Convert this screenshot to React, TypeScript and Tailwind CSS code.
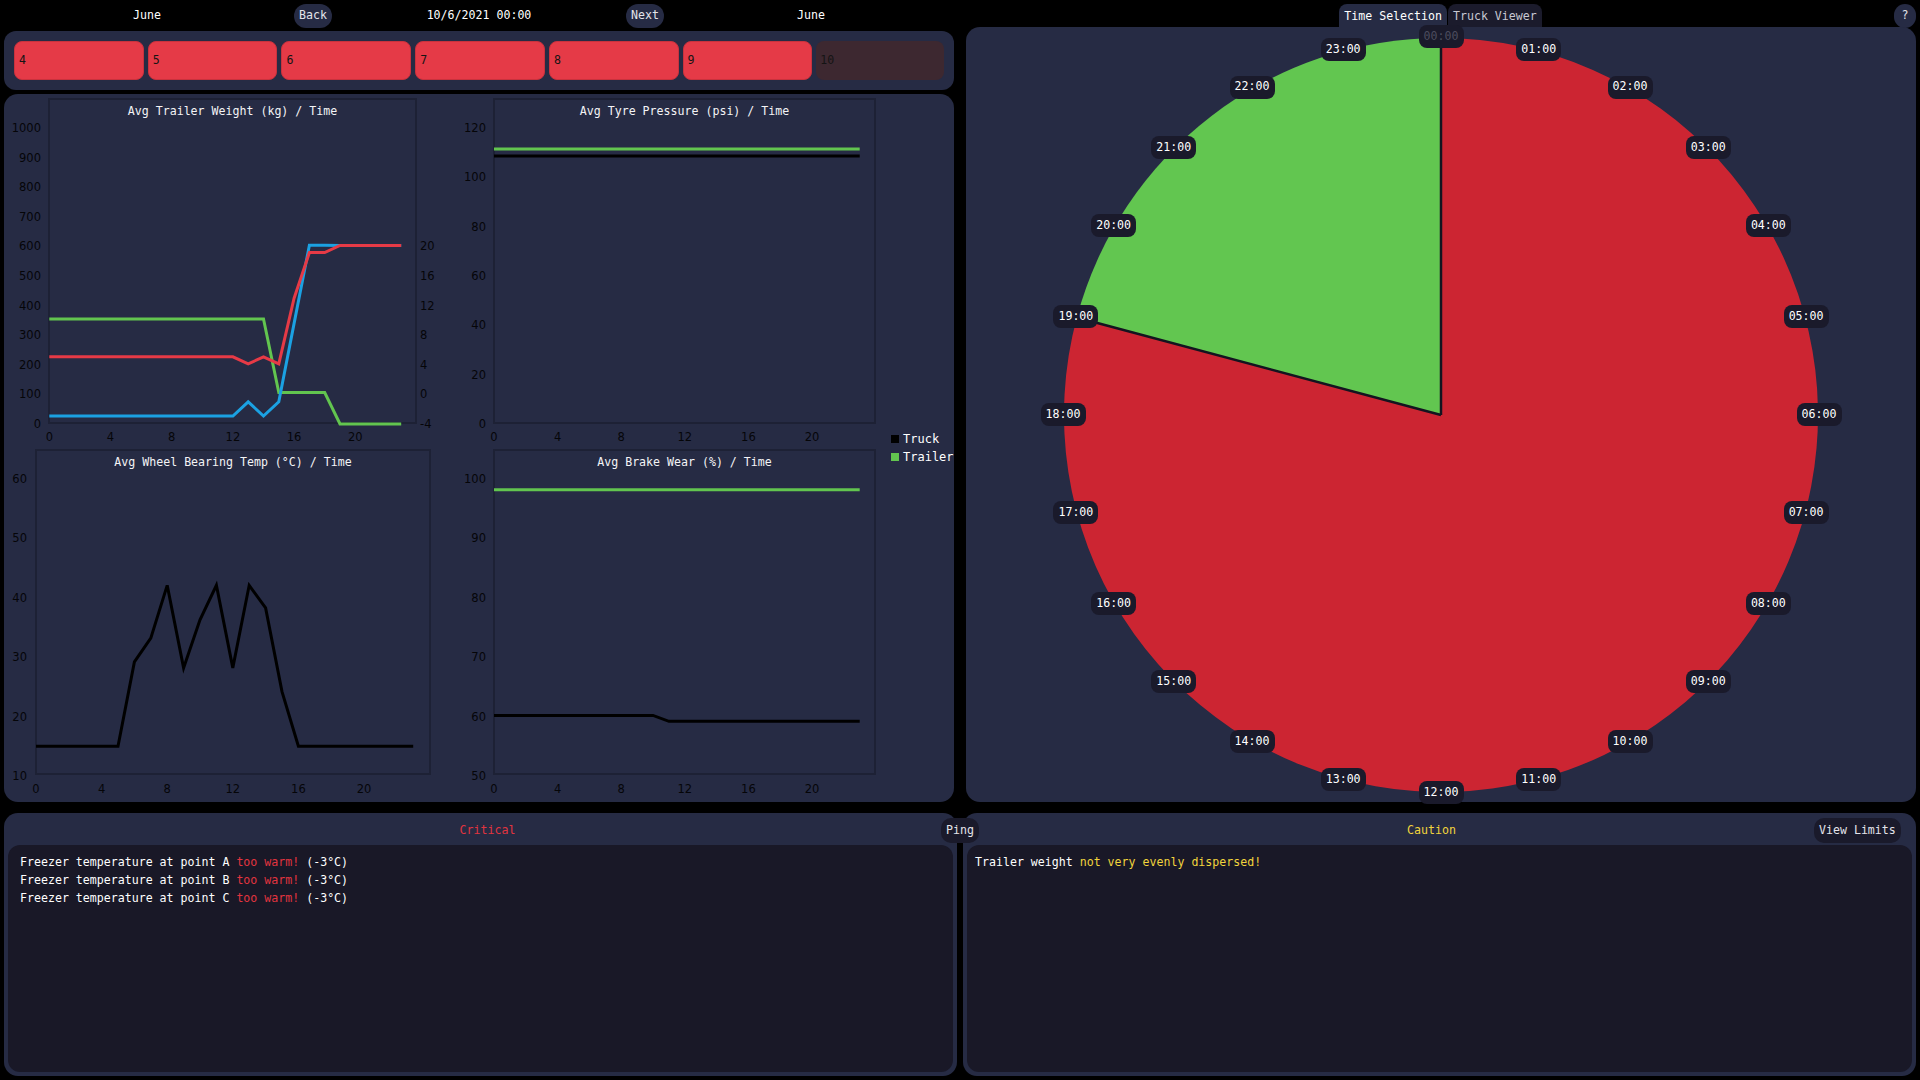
import React from "react";

type Series = { color: string; pts: number[] };
type ChartProps = {
  w: number;
  h: number;
  box: [number, number, number, number];
  title: string;
  titleY: number;
  x0: number;
  unit: number;
  vMin: number;
  vMax: number;
  pMin: number;
  pMax: number;
  ticks: number[];
  labelX: number;
  xLabelY: number;
  series: Series[];
  rTicks?: { label: string; v: number }[];
  rLabelX?: number;
};

function LineChart(p: ChartProps) {
  const yPx = (v: number) => p.pMin + ((v - p.vMin) / (p.vMax - p.vMin)) * (p.pMax - p.pMin);
  const xPx = (i: number) => p.x0 + i * p.unit;
  const [bx0, by0, bx1, by1] = p.box;
  return (
    <svg width={p.w} height={p.h} className="block shrink-0">
      <rect x={bx0} y={by0} width={bx1 - bx0} height={by1 - by0} fill="none" stroke="#1d2135" strokeWidth={2} />
      <text
        x={(bx0 + bx1) / 2}
        y={p.titleY}
        textAnchor="middle"
        fill="#f4f4f6"
        fontFamily="DejaVu Sans Mono, monospace"
        fontSize={11.6}
      >
        {p.title}
      </text>
      {p.ticks.map((t) => (
        <text key={t} x={p.labelX} y={yPx(t) + 4} textAnchor="end" fill="#050508" fontFamily="DejaVu Sans, sans-serif" fontSize={11.5}>
          {t}
        </text>
      ))}
      {p.rTicks?.map((t) => (
        <text key={t.label} x={p.rLabelX} y={yPx(t.v) + 4} textAnchor="start" fill="#050508" fontFamily="DejaVu Sans, sans-serif" fontSize={11.5}>
          {t.label}
        </text>
      ))}
      {[0, 4, 8, 12, 16, 20].map((t) => (
        <text key={t} x={xPx(t)} y={p.xLabelY} textAnchor="middle" fill="#050508" fontFamily="DejaVu Sans, sans-serif" fontSize={11.5}>
          {t}
        </text>
      ))}
      {p.series.map((s, k) => (
        <polyline
          key={k}
          points={s.pts.map((v, i) => `${xPx(i)},${yPx(v)}`).join(" ")}
          fill="none"
          stroke={s.color}
          strokeWidth={3}
          strokeLinejoin="miter"
        />
      ))}
    </svg>
  );
}

const GREEN = "#62c54f";
const RED = "#e63a46";
const BLUE = "#1ba1e2";

const rep = (v: number, n: number) => Array.from({ length: n }, () => v);

const trailerGreen = [...rep(355, 15), 106, 106, 106, 106, ...rep(0, 5)];
const trailerBlue = [...rep(27, 13), 75, 27, 75, 340, 604, 604, ...rep(603, 5)];
const trailerRed = [...rep(227, 13), 203, 227, 203, 425, 579, 579, ...rep(603, 5)];

const bearing = [15, 15, 15, 15, 15, 15, 29.2, 33.2, 42.1, 28.2, 36.3, 42.1, 28.2, 42.1, 38.3, 24.2, 15, 15, 15, 15, 15, 15, 15, 15];

const tyreGreen = rep(111.5, 24);
const tyreBlack = rep(108.6, 24);
const brakeGreen = rep(98.2, 24);
const brakeBlack = [...rep(60.2, 11), ...rep(59.2, 13)];

const days = ["4", "5", "6", "7", "8", "9"];

const hours = Array.from({ length: 24 }, (_, i) => i);

function Clock() {
  const R = 377;
  const C = 377;
  const a = (-75 * Math.PI) / 180;
  const sx = C + R * Math.sin(a);
  const sy = C - R * Math.cos(a);
  return (
    <div className="relative w-[754px] h-[754px]">
      <svg width={754} height={754} className="block">
        <path d={`M ${C} ${C} L ${C} ${C - R} A ${R} ${R} 0 1 1 ${sx} ${sy} Z`} fill="#cc2532" />
        <path d={`M ${C} ${C} L ${sx} ${sy} A ${R} ${R} 0 0 1 ${C} ${C - R} Z`} fill="#62c650" />
        <line x1={C} y1={C} x2={C} y2={C - R} stroke="#141420" strokeWidth={2.5} />
        <line x1={C} y1={C} x2={sx} y2={sy} stroke="#141420" strokeWidth={2.5} />
      </svg>
      {hours.map((h) => {
        const ang = (h * 15 * Math.PI) / 180;
        const x = C + 378 * Math.sin(ang);
        const y = C - 378 * Math.cos(ang);
        return (
          <div
            key={h}
            className={`absolute flex items-center justify-center h-[23px] w-[45px] rounded-[8px] bg-[#1a1a2b] text-[11.6px] ${
              h === 0 ? "text-[#4c4c5e]" : "text-white"
            }`}
            style={{ left: x - 22.5, top: y - 11.5 }}
          >
            {String(h).padStart(2, "0")}:00
          </div>
        );
      })}
    </div>
  );
}

export default function App() {
  return (
    <div className="w-[1920px] h-[1080px] bg-black overflow-hidden flex flex-col font-['DejaVu_Sans_Mono',monospace] text-[11.6px] text-white">
      <div className="flex px-1 gap-3 h-[802px]">
        {/* Left column */}
        <div className="w-[950px] flex flex-col">
          <div className="h-[31px] shrink-0 grid grid-cols-5 w-[830px] ml-[60px] items-center pt-[1px]">
            <div className="text-center">June</div>
            <div className="flex justify-center">
              <div className="h-[24px] px-[5px] rounded-full bg-[#262b44] text-[#e4e4ea] flex items-center">Back</div>
            </div>
            <div className="text-center">10/6/2021 00:00</div>
            <div className="flex justify-center">
              <div className="h-[24px] px-[5px] rounded-full bg-[#262b44] text-[#e4e4ea] flex items-center">Next</div>
            </div>
            <div className="text-center">June</div>
          </div>
          <div className="h-[59px] shrink-0 rounded-[12px] bg-[#262b44] px-[10px] py-[10px] flex gap-[4px]">
            {days.map((d) => (
              <div key={d} className="flex-1 rounded-[8px] bg-[#e53a47] border border-[#c9323d] flex items-center pl-[4px] text-[#141414]">
                {d}
              </div>
            ))}
            <div className="flex-1 rounded-[8px] bg-[#3d2830] flex items-center pl-[4px] text-[#141414]">10</div>
          </div>
          <div className="mt-[4px] flex-1 rounded-[14px] bg-[#262b44] flex overflow-hidden">
            <div className="flex flex-col w-[442px]">
              <LineChart
                w={442}
                h={354}
                box={[45, 5, 412, 329]}
                title="Avg Trailer Weight (kg) / Time"
                titleY={21}
                x0={45.3}
                unit={15.3}
                vMin={0}
                vMax={1000}
                pMin={330}
                pMax={34}
                ticks={[0, 100, 200, 300, 400, 500, 600, 700, 800, 900, 1000]}
                labelX={37}
                xLabelY={347}
                rTicks={[-4, 0, 4, 8, 12, 16, 20].map((t) => ({ label: String(t), v: (t + 4) * 25 }))}
                rLabelX={416}
                series={[
                  { color: GREEN, pts: trailerGreen },
                  { color: BLUE, pts: trailerBlue },
                  { color: RED, pts: trailerRed },
                ]}
              />
              <LineChart
                w={442}
                h={354}
                box={[32, 2, 426, 326]}
                title="Avg Wheel Bearing Temp (°C) / Time"
                titleY={18}
                x0={32}
                unit={16.4}
                vMin={10}
                vMax={60}
                pMin={328}
                pMax={31}
                ticks={[10, 20, 30, 40, 50, 60]}
                labelX={23}
                xLabelY={345}
                series={[{ color: "#000000", pts: bearing }]}
              />
            </div>
            <div className="flex flex-col w-[442px]">
              <LineChart
                w={442}
                h={354}
                box={[48, 5, 429, 329]}
                title="Avg Tyre Pressure (psi) / Time"
                titleY={21}
                x0={48}
                unit={15.9}
                vMin={0}
                vMax={120}
                pMin={330}
                pMax={34}
                ticks={[0, 20, 40, 60, 80, 100, 120]}
                labelX={40}
                xLabelY={347}
                series={[
                  { color: "#000000", pts: tyreBlack },
                  { color: GREEN, pts: tyreGreen },
                ]}
              />
              <LineChart
                w={442}
                h={354}
                box={[48, 2, 429, 326]}
                title="Avg Brake Wear (%) / Time"
                titleY={18}
                x0={48}
                unit={15.9}
                vMin={50}
                vMax={100}
                pMin={328}
                pMax={31}
                ticks={[50, 60, 70, 80, 90, 100]}
                labelX={40}
                xLabelY={345}
                series={[
                  { color: "#000000", pts: brakeBlack },
                  { color: GREEN, pts: brakeGreen },
                ]}
              />
            </div>
            <div className="flex flex-col pt-[337px] pl-[3px] gap-[2px] text-[12px] leading-[16px]">
              <div className="flex items-center gap-[4px]">
                <span className="w-[8px] h-[8px] bg-black inline-block" />
                <span>Truck</span>
              </div>
              <div className="flex items-center gap-[4px]">
                <span className="w-[8px] h-[8px] bg-[#62c54f] inline-block" />
                <span>Trailer</span>
              </div>
            </div>
          </div>
        </div>
        {/* Right column */}
        <div className="w-[950px] flex flex-col relative">
          <div className="h-[27px] shrink-0 flex justify-center items-end pr-[1px]">
            <div className="h-[23px] px-[5px] pt-[2px] rounded-t-[8px] bg-[#262b44] flex items-center text-white">Time Selection</div>
            <div className="h-[23px] px-[5px] pt-[2px] ml-[1px] rounded-t-[8px] bg-[#1b1b2c] flex items-center text-[#c8c8d2]">Truck Viewer</div>
          </div>
          <div className="absolute right-0 top-[4px] h-[24px] w-[22px] rounded-full bg-[#262b44] flex items-center justify-center text-[#e4e4ea]">?</div>
          <div className="flex-1 rounded-[14px] bg-[#262b44] flex items-center justify-center">
            <Clock />
          </div>
        </div>
      </div>
      <div className="mt-[11px] h-[263px] flex px-1 gap-[6px] relative">
        <div className="w-[953px] rounded-[14px] bg-[#262b44] flex flex-col p-[4px]">
          <div className="h-[28px] shrink-0 flex items-center justify-center pl-[14px] text-[#e2343f]">Critical</div>
          <div className="flex-1 rounded-[12px] bg-[#191827] pl-[12px] pt-[8px] leading-[18px]">
            {["A", "B", "C"].map((p) => (
              <div key={p}>
                Freezer temperature at point {p} <span className="text-[#e2343f]">too warm!</span> (-3°C)
              </div>
            ))}
          </div>
        </div>
        <div className="flex-1 rounded-[14px] bg-[#262b44] flex flex-col p-[4px]">
          <div className="h-[28px] shrink-0 flex items-center justify-center pr-[16px] text-[#f2d43c]">Caution</div>
          <div className="flex-1 rounded-[12px] bg-[#191827] pl-[8px] pt-[8px] leading-[18px]">
            <div>
              Trailer weight <span className="text-[#f2d43c]">not very evenly dispersed!</span>
            </div>
          </div>
        </div>
        <div className="absolute left-[941px] top-[5px] h-[25px] px-[5px] rounded-[10px] bg-[#1a1a2b] flex items-center text-[#e4e4ea]">Ping</div>
        <div className="absolute left-[1814px] top-[5px] h-[25px] px-[5px] rounded-[10px] bg-[#1a1a2b] flex items-center text-[#e4e4ea]">View Limits</div>
      </div>
    </div>
  );
}
